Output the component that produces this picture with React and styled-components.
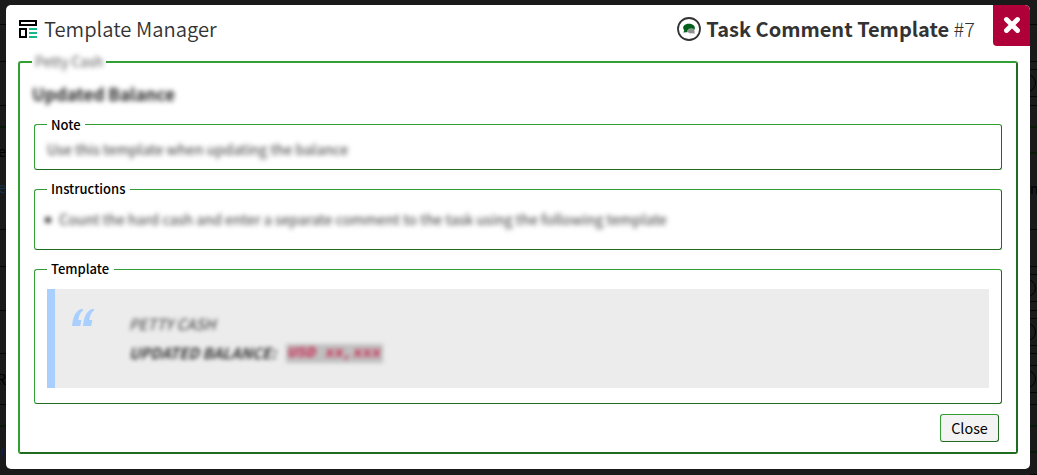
import React from "react";
import styled, { createGlobalStyle, css } from "styled-components";

const Global = createGlobalStyle`
  * { box-sizing: border-box; }
  body { margin: 0; background: #1a1a1a; overflow: hidden; font-family: "Noto Sans CJK SC", "Noto Sans", sans-serif; color: #000; }
`;

const light = "#339f33";
const dark = "#216b21";

const bevel = css`
  border-style: solid;
  border-color: ${light} ${dark} ${dark} ${light};
`;

const Page = styled.div`
  display: grid;
  grid-template-columns: 6px 1024px 7px;
  width: 1037px;
  height: 475px;
  overflow: hidden;
`;

const Strip = styled.div`
  display: flex;
  flex-direction: column;
  height: 475px;
  overflow: hidden;
`;

const StripRow = styled.div`
  flex: none;
  display: flex;
  align-items: center;
  justify-content: ${(p) => (p.$end ? "flex-end" : "flex-start")};
  height: ${(p) => p.$h}px;
  border-bottom: ${(p) => (p.$bare ? "0" : p.$green ? "2px solid #071a07" : "1px solid #050505")};
  font-size: 14px;
  line-height: 14px;
  color: ${(p) => p.$color || "#000"};
  white-space: nowrap;
  overflow: hidden;
`;

const Ring = styled.span`
  flex: none;
  width: 18px;
  height: 18px;
  margin-right: 1px;
  border: 1px solid #000;
  border-radius: 50%;
`;

const Modal = styled.section`
  display: flex;
  flex-direction: column;
  height: 464px;
  margin-top: 5px;
  background: #fff;
  border-radius: 5px;
  overflow: hidden;
`;

const Header = styled.header`
  flex: none;
  display: flex;
  align-items: flex-start;
  height: 47px;
  padding-left: 13px;
  color: #333;
`;

const Title = styled.h1`
  display: flex;
  align-items: center;
  margin: 0;
  height: 48px;
  gap: 7px;
  font-size: 20.2px;
  font-weight: 350;
  line-height: 47px;
  white-space: nowrap;

  span {
    height: 48px;
  }
`;

const Subject = styled(Title)`
  margin-left: auto;
  gap: 5px;
  font-size: 20px;
  font-weight: 300;

  b {
    font-weight: 700;
  }
`;

const Dismiss = styled.button`
  display: flex;
  align-items: center;
  justify-content: center;
  width: 37px;
  height: 41px;
  margin-left: 18px;
  padding: 0 0 1px 0;
  border: 0;
  border-radius: 0 5px 0 4px;
  background: #b0003a;
`;

const Panel = styled.fieldset`
  ${bevel}
  border-width: ${(p) => (p.$outer ? 2 : 1)}px;
  border-radius: 3px;
  min-width: 0;
`;

const Outer = styled(Panel)`
  height: 402px;
  margin: 0 12px;
  padding: 0 14px 0 12px;
`;

const Inner = styled(Panel)`
  height: ${(p) => p.$h}px;
  margin: ${(p) => p.$top}px 0 0 2px;
  padding: 0 12px;
`;

const OuterLegend = styled.legend`
  width: 74px;
  height: 20px;
  padding: 0 3px;
  font-size: 13.9px;
  line-height: 19px;
  color: #555;
  white-space: nowrap;
`;

const Legend = styled.legend`
  height: 17px;
  width: ${(p) => p.$w}px;
  padding: 0 4px;
  font-size: 13px;
  font-weight: 500;
  line-height: ${(p) => p.$line || 17}px;
  white-space: nowrap;
`;

const Blurred = styled.span`
  display: inline-block;
  filter: blur(${(p) => p.$r || 2.6}px);
`;

const Heading = styled.h2`
  margin: 10px 0 0;
  height: 24px;
  font-size: 17.1px;
  line-height: 24px;
  color: #222;
`;

const Text = styled.p`
  margin: ${(p) => p.$top}px 0 0;
  font-size: 14.33px;
  line-height: 20px;
  color: #333;
  white-space: nowrap;
`;

const Bullet = styled.i`
  display: inline-block;
  width: 6px;
  height: 6px;
  margin: 0 8px 2px -2px;
  border-radius: 50%;
  background: #222;
`;

const Quote = styled.blockquote`
  display: flex;
  height: 99px;
  margin: 11px 0 0;
  padding: 20px 0 0 17px;
  border-left: 8px solid #a9cfff;
  background: #ececec;
`;

const QuoteBody = styled.div`
  margin: -1px 0 0 33px;
  font-size: 15.1px;
  font-style: italic;
  line-height: 28px;
  color: #333;
  white-space: nowrap;
`;

const QuoteLine = styled.div`
  display: flex;
  align-items: center;
  height: 29px;
  gap: 10px;
`;

const Code = styled.code`
  display: block;
  margin-top: 4px;
  padding: 0 2px;
  font: italic 15.5px/19px "Liberation Mono", monospace;
  color: #c7254e;
  background: #c0c0c0;
`;

const Actions = styled.div`
  display: flex;
  justify-content: flex-end;
  margin: 10px 3px 0 0;
`;

const CloseButton = styled.button`
  ${bevel}
  border-width: 1px;
  border-radius: 3px;
  width: 59px;
  height: 28px;
  padding: 0;
  background: #f3f3f3;
  font-family: inherit;
  font-size: 14.4px;
  line-height: 26px;
  color: #000;
`;

const TemplateIcon = () => (
  <svg width="18" height="18" viewBox="0 0 18 18" fill="none" strokeWidth="2">
    <path d="M1 1h16v4H1zM1 9h6v8H1z" stroke="#000" />
    <path d="M10 9h8M10 13h8M10 17h8" stroke="#14b88a" />
  </svg>
);

const CommentIcon = () => (
  <svg width="24" height="24" viewBox="0 0 24 24">
    <circle cx="12" cy="12" r="11" fill="#fff" stroke="#333" strokeWidth="1.8" />
    <path d="M6 15.300c1-.7 1.500-1.500.9-2.600C4.500 9.500 8 6.800 12 6.800s7 2.500 5.500 6L11 15c-2 .3-3 .5-5 .3z" fill="#055f1c" />
    <path d="M10.500 14.200c0-3.400 7.300-3.400 7.300 0 0 1-.4 1.400.4 2.600-1 .2-1.600-.1-2.200-.4-3 .4-5.500-.2-5.500-2.200z" fill="#8f8f8f" stroke="#fff" strokeWidth=".4" />
  </svg>
);

const CrossIcon = () => (
  <svg width="18" height="18" viewBox="0 0 18 18">
    <path d="M3.500 3.500l11 11M14.500 3.500l-11 11" stroke="#fff" strokeWidth="4.900" strokeLinecap="round" />
  </svg>
);

const QuoteMark = () => (
  <svg width="24" height="18" viewBox="0 0 24 18" fill="#a9cfff">
    <path d="M9 0h2.200l-.3 1.500Q7 4.500 6.300 11H9.300L8.300 17H0C.8 9 3 2 9 0zM20 0h2.200l-.3 1.500Q18 4.500 17.300 11H20.300L19.300 17H11C11.800 9 14 2 20 0z" />
  </svg>
);

const leftRows = [
  { h: 25 }, { h: 37 }, { h: 44 }, { h: 22, green: true },
  { h: 46, text: "Te", bare: true }, { h: 26, text: "le", color: "#17304d", bare: true }, { h: 30 }, { h: 37 },
  { h: 44 }, { h: 43 }, { h: 51, text: "R" }, { h: 22, green: true }, { h: 49, text: "er", color: "#101c4d" },
];

const rightRows = [
  { h: 25 }, { h: 37 }, { h: 8 }, { h: 27, ring: true }, { h: 9 }, { h: 22, green: true },
  { h: 26, green: true }, { h: 68, text: "n", bare: true }, { h: 8 }, { h: 37 }, { h: 8 }, { h: 27, ring: true },
  { h: 9 }, { h: 8 }, { h: 27, ring: true }, { h: 8 }, { h: 12 }, { h: 27, ring: true },
  { h: 12 }, { h: 22, green: true }, { h: 26, green: true }, { h: 22 },
];

const PageEdge = ({ rows, end }) => (
  <Strip>
    {rows.map((r, i) => (
      <StripRow key={i} $h={r.h} $green={r.green} $bare={r.bare} $color={r.color} $end={end || r.ring}>
        {r.ring ? <Ring /> : r.text}
      </StripRow>
    ))}
  </Strip>
);

export default function App() {
  return (
    <>
      <Global />
      <Page>
        <PageEdge rows={leftRows} end />
        <Modal>
          <Header>
            <Title><TemplateIcon /><span>Template Manager</span></Title>
            <Subject><CommentIcon /><span><b>Task Comment Template</b> #7</span></Subject>
            <Dismiss aria-label="Dismiss"><CrossIcon /></Dismiss>
          </Header>
          <Outer $outer>
            <OuterLegend><Blurred>Petty Cash</Blurred></OuterLegend>
            <Heading><Blurred>Updated Balance</Blurred></Heading>
            <Inner $h={54} $top={10}>
              <Legend $w={38}>Note</Legend>
              <Text $top={6}><Blurred>Use this template when updating the balance</Blurred></Text>
            </Inner>
            <Inner $h={69} $top={11}>
              <Legend $w={83} $line={15}>Instructions</Legend>
              <Text $top={11}><Blurred><Bullet />Count the hard cash and enter a separate comment to the task using the following template</Blurred></Text>
            </Inner>
            <Inner $h={143} $top={11}>
              <Legend $w={67} $line={15}>Template</Legend>
              <Quote>
                <QuoteMark />
                <QuoteBody>
                  <QuoteLine><Blurred $r={2.1}>PETTY CASH</Blurred></QuoteLine>
                  <QuoteLine>
                    <Blurred $r={2.1}><b>UPDATED BALANCE:</b></Blurred>
                    <Blurred $r={2.1}><Code><b>USD xx,xxx</b></Code></Blurred>
                  </QuoteLine>
                </QuoteBody>
              </Quote>
            </Inner>
            <Actions><CloseButton>Close</CloseButton></Actions>
          </Outer>
        </Modal>
        <PageEdge rows={rightRows} />
      </Page>
    </>
  );
}
